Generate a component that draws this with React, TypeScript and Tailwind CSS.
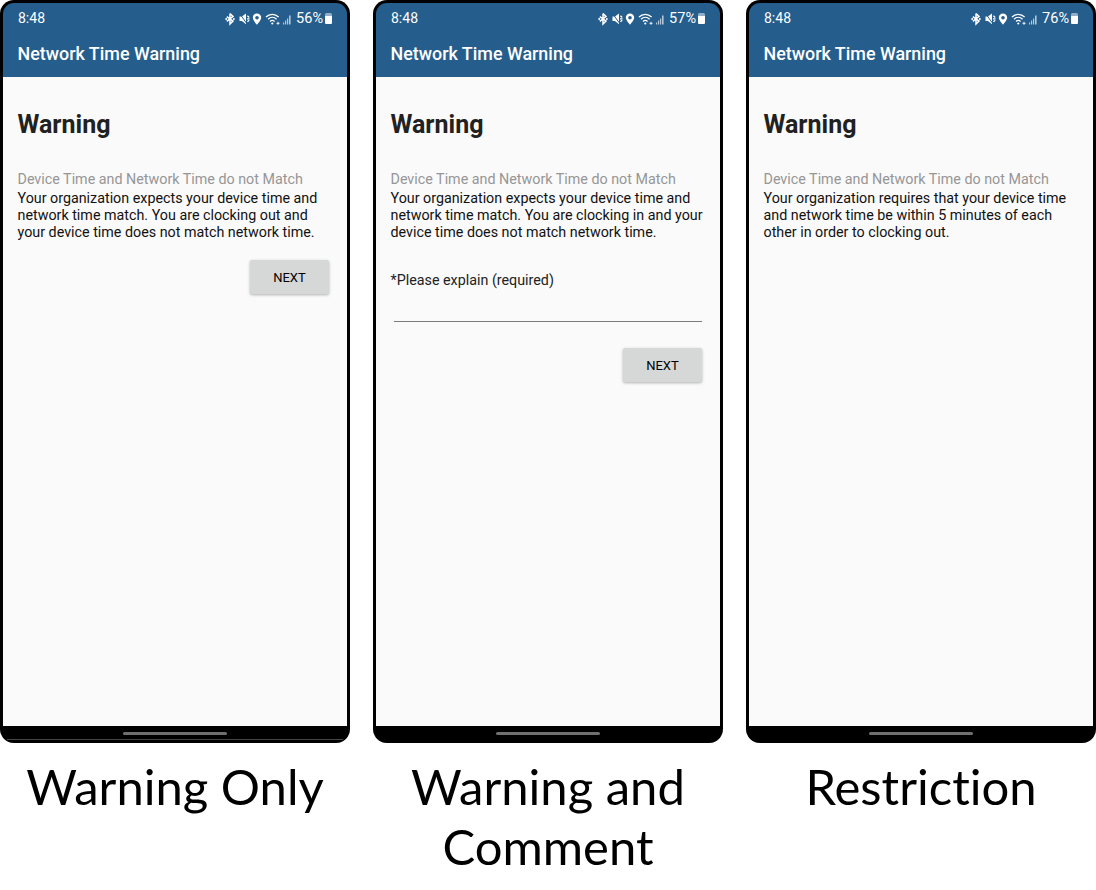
import { ReactNode } from 'react';

const StatusIcons = () => (
  <svg width="67" height="14" viewBox="0 0 67 14" fill="none" className="shrink-0">
    {/* bluetooth */}
    <path d="M5 1.5v10.5l3-2.9L1.8 4.6M5 1.5l3 2.9-6.2 4.9" stroke="#fff" strokeWidth="1.5" />
    <circle cx="1.2" cy="6.9" r="1" fill="#fff" />
    <circle cx="8.8" cy="6.9" r="1" fill="#fff" />
    {/* muted speaker */}
    <path d="M14.5 4.5h2.4L21 1.5v10.8l-4.1-3.2h-2.4z" fill="#fff" />
    <path d="M22.4 3.8l1.8 1.6M22.4 9.8l1.8-1.6M22 6.8h2.6" stroke="#fff" strokeWidth="1.3" />
    <path d="M14.5 1.5l8 11" stroke="#255d8c" strokeWidth="1" />
    {/* location pin */}
    <path fillRule="evenodd" d="M32 1.5c-2.4 0-4.2 1.8-4.2 4.1 0 2.9 4.2 7.1 4.2 7.1s4.2-4.2 4.2-7.1c0-2.3-1.8-4.1-4.2-4.1zm0 2.4a1.8 1.8 0 1 1 0 3.6 1.8 1.8 0 0 1 0-3.6z" fill="#fff" />
    {/* wifi */}
    <path d="M41 5c3.6-3.6 9-3.6 12.6 0M43 7.2c2.5-2.4 6.1-2.4 8.6 0M45 9.4c1.4-1.2 3.2-1.2 4.6 0" stroke="#fff" strokeWidth="1.3" />
    <circle cx="47.3" cy="11.5" r="1.1" fill="#fff" />
    <path d="M51.5 11.3h3M53 9.8v3" stroke="#fff" strokeWidth="0.9" />
    {/* signal */}
    <path d="M58 12.5v-2h1.2v2zM60 12.5V8.5h1.2v4zM62 12.5V6.5h1.2v6zM64 12.5V3.5h1.6v9z" fill="#fff" fillOpacity="0.65" />
  </svg>
);

const Battery = () => (
  <span className="relative flex h-[11px] w-[7px] flex-col justify-end overflow-hidden rounded-[1.5px] bg-white/50">
    <span className="h-[8px] w-full bg-white" />
  </span>
);

const NextButton = () => (
  <button className="flex h-[34px] w-[79px] items-center justify-center rounded-[2px] bg-[#d6d7d7] pt-px text-[13px] text-black shadow-[0_1px_3px_rgba(0,0,0,0.3)]">
    NEXT
  </button>
);

const Phone = ({ pct, text, edge, children }: { pct: string; text: string; edge?: boolean; children?: ReactNode }) => (
  <div className="flex h-[743px] w-[350px] shrink-0 flex-col overflow-hidden rounded-[14px] border-[3px] border-b-0 border-black bg-black font-['Roboto',sans-serif]">
    <div className="flex h-[74px] shrink-0 flex-col bg-[#255d8c] text-white">
      <div className="flex items-center justify-between pl-[15px] pr-[15px] pt-[7px] text-[14px] leading-[17px]">
        <span>8:48</span>
        <span className="flex items-center gap-[2px]">
          <StatusIcons />
          <span className="ml-[2px] text-[14.5px]">{pct}</span>
          <Battery />
        </span>
      </div>
      <div className="pl-[14.5px] pt-[15px] text-[17.9px] font-medium leading-6">Network Time Warning</div>
    </div>
    <div className="flex h-[649px] shrink-0 flex-col bg-[#fafafa] pl-[14.5px] pr-[15px] pt-[33px]">
      <h1 className="text-[25px] font-bold leading-[30px] text-[#212121]">Warning</h1>
      <p className="mt-[31px] text-[14.3px] leading-[17px] text-[#969696]">Device Time and Network Time do not Match</p>
      <p className="mt-[2px] text-[14.3px] leading-[17px] text-[#111]">{text}</p>
      {children}
    </div>
    <div className="relative flex flex-1 justify-center pt-[6px]">
      <span className="h-[3px] w-[104px] rounded-full bg-[#6f6f6f]" />
      {edge && <span className="absolute inset-x-0 bottom-[3px] h-px bg-[#444]" />}
    </div>
  </div>
);

const Caption = ({ children }: { children: ReactNode }) => (
  <div className="mt-[13px] px-6 text-center font-['Lato',sans-serif] text-[49px] leading-[60px] text-black [font-variant-ligatures:none]">{children}</div>
);

export default function App() {
  return (
    <div className="flex h-[890px] w-[1096px] gap-[23px] overflow-hidden bg-white">
      <div className="w-[350px] shrink-0">
        <Phone edge pct="56%" text="Your organization expects your device time and network time match. You are clocking out and your device time does not match network time.">
          <div className="mt-[19px] flex justify-end pr-[3px]">
            <NextButton />
          </div>
        </Phone>
        <Caption>Warning Only</Caption>
      </div>
      <div className="w-[350px] shrink-0">
        <Phone pct="57%" text="Your organization expects your device time and network time match. You are clocking in and your device time does not match network time.">
          <p className="mt-[31px] text-[14.3px] leading-[17px] text-[#222]">*Please explain (required)</p>
          <div className="ml-[3.5px] mr-[3px] mt-[32px] h-px bg-[#7d7d7d]" />
          <div className="mt-[26px] flex justify-end pr-[3px]">
            <NextButton />
          </div>
        </Phone>
        <Caption>Warning and Comment</Caption>
      </div>
      <div className="w-[350px] shrink-0">
        <Phone pct="76%" text="Your organization requires that your device time and network time be within 5 minutes of each other in order to clocking out." />
        <Caption>Restriction</Caption>
      </div>
    </div>
  );
}
